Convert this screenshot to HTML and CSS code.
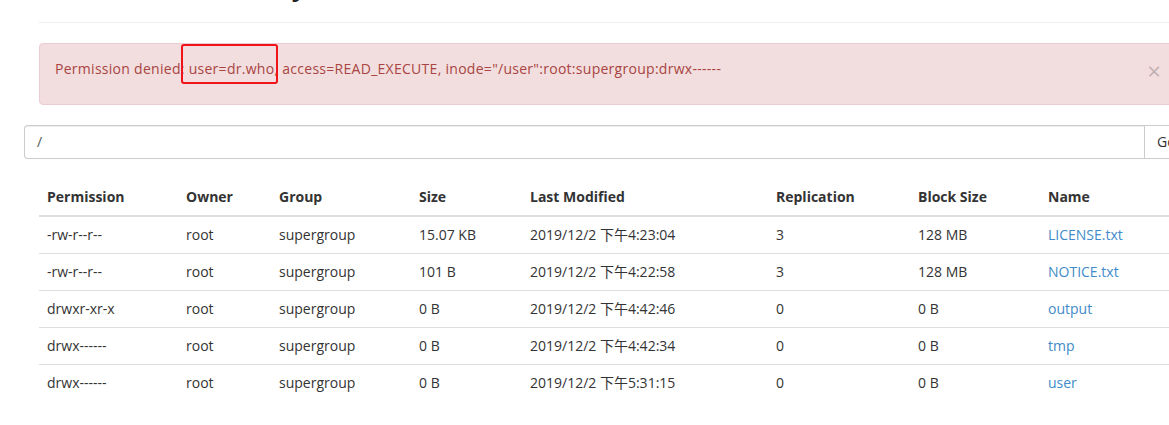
FILE: index.html
```html
<!DOCTYPE html>
<html lang="en">
<head>
<meta charset="utf-8">
<title>Browse Directory</title>
<link rel="stylesheet" href="styles.css">
</head>
<body>
<div class="page">
  <div class="page-header"><h1>Browse Directory</h1></div>

  <div class="alert">
    <span class="alert-text">Permission denied: <span class="mark">user=dr.who,</span> access=READ_EXECUTE, inode="/user":root:supergroup:drwx------</span>
    <span class="close">&times;</span>
  </div>

  <div class="input-group">
    <div class="path-input">/</div>
    <div class="go-btn">Go!</div>
  </div>

  <table class="listing">
    <colgroup>
      <col class="c-perm"><col class="c-owner"><col class="c-group"><col class="c-size"><col class="c-mod"><col class="c-rep"><col class="c-block"><col class="c-name">
    </colgroup>
    <thead>
      <tr><th>Permission</th><th>Owner</th><th>Group</th><th>Size</th><th>Last Modified</th><th>Replication</th><th>Block Size</th><th>Name</th></tr>
    </thead>
    <tbody>
      <tr><td>-rw-r--r--</td><td>root</td><td>supergroup</td><td>15.07 KB</td><td>2019/12/2 下午4:23:04</td><td>3</td><td>128 MB</td><td><a href="#">LICENSE.txt</a></td></tr>
      <tr><td>-rw-r--r--</td><td>root</td><td>supergroup</td><td>101 B</td><td>2019/12/2 下午4:22:58</td><td>3</td><td>128 MB</td><td><a href="#">NOTICE.txt</a></td></tr>
      <tr><td>drwxr-xr-x</td><td>root</td><td>supergroup</td><td>0 B</td><td>2019/12/2 下午4:42:46</td><td>0</td><td>0 B</td><td><a href="#">output</a></td></tr>
      <tr><td>drwx------</td><td>root</td><td>supergroup</td><td>0 B</td><td>2019/12/2 下午4:42:34</td><td>0</td><td>0 B</td><td><a href="#">tmp</a></td></tr>
      <tr><td>drwx------</td><td>root</td><td>supergroup</td><td>0 B</td><td>2019/12/2 下午5:31:15</td><td>0</td><td>0 B</td><td><a href="#">user</a></td></tr>
    </tbody>
  </table>
</div>
</body>
</html>
```

FILE: styles.css
```css
html, body {
  margin: 0;
  padding: 0;
  overflow: hidden;
  background: #fff;
}
body {
  font-family: "Open Sans", "Noto Sans CJK SC", sans-serif;
  font-size: 14px;
  line-height: 20px;
  color: #333;
}
.page {
  width: 1175px;
  padding-left: 24px;
}
.page-header {
  margin: -37px 0 20px 15px;
  padding-bottom: 9px;
  border-bottom: 1px solid #eee;
}
.page-header h1 {
  margin: 0 0 10px 0;
  font-family: "Liberation Sans", sans-serif;
  font-size: 35.5px;
  font-weight: 500;
  line-height: 40px;
  color: #222;
}
.alert {
  margin: 0 0 20px 15px;
  padding: 15px 37px 25px 15px;
  background: #f2dede;
  border: 1px solid #ebccd1;
  border-radius: 4px;
  color: #a94442;
  display: flex;
  justify-content: space-between;
  align-items: flex-start;
}
.alert-text {
  letter-spacing: 0.28px;
}
.mark {
  position: relative;
}
.mark::after {
  content: "";
  position: absolute;
  left: -8px;
  right: 0;
  top: -15px;
  bottom: -6px;
  border: 2px solid #f0141a;
  border-radius: 3px;
}
.close {
  font-size: 24px;
  line-height: 20px;
  padding-top: 2px;
  height: 20px;
  box-sizing: border-box;
  color: #000;
  opacity: 0.2;
}
.input-group {
  display: flex;
  height: 34px;
}
.path-input {
  box-sizing: border-box;
  width: 1120px;
  height: 34px;
  padding: 6px 12px;
  border: 1px solid #ccc;
  border-right: 0;
  border-radius: 4px 0 0 4px;
  box-shadow: inset 0 1px 1px rgba(0,0,0,.075);
  color: #555;
}
.go-btn {
  box-sizing: border-box;
  height: 34px;
  padding: 6px 12px;
  border: 1px solid #ccc;
  background: #fff;
  color: #333;
}
.listing {
  margin: 20px 0 0 15px;
  width: 1160px;
  table-layout: fixed;
  border-collapse: collapse;
  border-spacing: 0;
}
.c-perm { width: 139px; }
.c-owner { width: 93px; }
.c-group { width: 140px; }
.c-size { width: 111px; }
.c-mod { width: 246px; }
.c-rep { width: 142px; }
.c-block { width: 130px; }
.c-name { width: 159px; }
.listing th {
  text-align: left;
  font-weight: bold;
  padding: 8px;
  line-height: 20px;
  border-bottom: 2px solid #ddd;
}
.listing td {
  padding: 8px;
  line-height: 20px;
  border-top: 1px solid #ddd;
  white-space: nowrap;
}
.listing a {
  color: #428bca;
  text-decoration: none;
}
```
